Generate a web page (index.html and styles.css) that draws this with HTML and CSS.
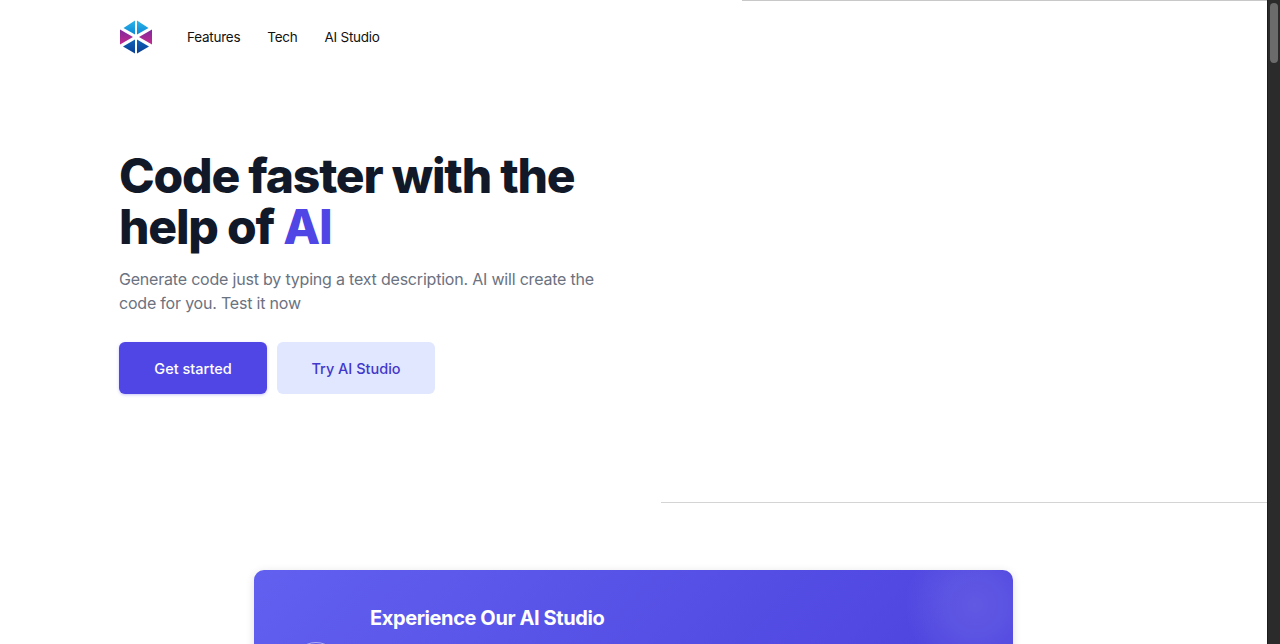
FILE: index.html
```html
<!DOCTYPE html>
<html lang="en">
<head>
  <meta charset="UTF-8">
  <meta name="viewport" content="width=device-width, initial-scale=1.0">
  <title>AI Code</title>
  <link rel="stylesheet" href="styles.css">
</head>
<body>
  <div class="page">
    <header class="nav">
      <svg class="logo" viewBox="0 0 32 34" width="32" height="34" aria-label="Logo">
        <defs>
          <linearGradient id="sky" x1="0" y1="0" x2="0" y2="1">
            <stop offset="0" stop-color="#29b6ea"/>
            <stop offset="1" stop-color="#0e86d4"/>
          </linearGradient>
          <linearGradient id="plum" x1="0" y1="0" x2="0" y2="1">
            <stop offset="0" stop-color="#7d2a9e"/>
            <stop offset="1" stop-color="#c4298c"/>
          </linearGradient>
          <linearGradient id="navy" x1="0" y1="0" x2="0" y2="1">
            <stop offset="0" stop-color="#0f62b8"/>
            <stop offset="1" stop-color="#0b3f94"/>
          </linearGradient>
        </defs>
        <path d="M15 0.500v14L3.500 8z" fill="url(#sky)"/>
        <path d="M17 0.500v14l11.500-6.500z" fill="url(#sky)"/>
        <path d="M0 9.500l13 7.500-13 7.500z" fill="url(#plum)"/>
        <path d="M32 9.500l-13 7.500 13 7.500z" fill="url(#plum)"/>
        <path d="M15 19.500v14L3 26.500z" fill="url(#navy)"/>
        <path d="M17 19.500v14l12-7z" fill="url(#navy)"/>
      </svg>
      <nav class="nav-links">
        <a href="#">Features</a>
        <a href="#">Tech</a>
        <a href="#">AI Studio</a>
      </nav>
    </header>

    <section class="hero">
      <div class="hero-text">
        <h1>Code faster with the help of <span class="accent">AI</span></h1>
        <p>Generate code just by typing a text description. AI will create the code for you. Test it now</p>
        <div class="hero-buttons">
          <a class="btn btn-primary" href="#">Get started</a>
          <a class="btn btn-soft" href="#">Try AI Studio</a>
        </div>
      </div>
      <div class="hero-art"></div>
    </section>

    <section class="studio-card">
      <div class="studio-glow"></div>
      <div class="studio-icon"></div>
      <h2>Experience Our AI Studio</h2>
    </section>
  </div>
  <div class="scrollbar"><div class="scrollbar-thumb"></div></div>
</body>
</html>
```

FILE: styles.css
```css
html, body {
  margin: 0;
  height: 644px;
  overflow: hidden;
}
body {
  background-color: #fff;
  color: #111827;
  font-family: Inter, "Liberation Sans", sans-serif;
  display: flex;
}
.page {
  flex: 1;
  min-width: 0;
  overflow: hidden;
}
.scrollbar {
  width: 13px;
  background-color: #2b2b2b;
  border-left: 1px solid #1c1c1c;
  box-sizing: border-box;
  padding: 3px 2px;
}
.scrollbar-thumb {
  height: 60px;
  border-radius: 5px;
  background-color: #6b6b6b;
}
.nav {
  display: flex;
  align-items: center;
  height: 74px;
  padding-left: 120px;
  box-sizing: border-box;
  padding-bottom: 1px;
}
.logo {
  display: block;
}
.nav-links {
  display: flex;
  gap: 27px;
  margin-left: 35px;
}
.nav-links a {
  color: #111;
  font-size: 13.500px;
  letter-spacing: -0.250px;
  text-decoration: none;
}
.hero {
  display: flex;
  height: 429px;
  position: relative;
}
.hero-text {
  padding: 76px 0 0 119px;
  width: 490px;
}
.hero h1 {
  margin: 0;
  font-size: 48px;
  line-height: 51px;
  font-weight: 800;
  letter-spacing: -1.200px;
  color: #111827;
}
.accent {
  color: #4f46e5;
}
.hero p {
  margin: 15px 0 0;
  font-size: 16px;
  line-height: 24px;
  letter-spacing: -0.200px;
  color: #6b7280;
}
.hero-buttons {
  display: flex;
  gap: 10px;
  margin-top: 27px;
}
.btn {
  display: flex;
  align-items: center;
  justify-content: center;
  height: 52px;
  border-radius: 6px;
  font-size: 14.500px;
  font-weight: 500;
  text-decoration: none;
}
.btn-primary {
  width: 148px;
  background-color: #4f46e5;
  color: #fff;
  box-shadow: 0 1px 3px rgba(79, 70, 229, 0.3);
}
.btn-soft {
  width: 158px;
  background-color: #e0e7ff;
  color: #4338ca;
}
.hero-art {
  position: absolute;
  top: -74px;
  right: 0;
  left: 661px;
  height: 502px;
  border-bottom: 1px solid #d4d4d4;
}
.hero-art::before {
  content: "";
  position: absolute;
  top: 0;
  left: 81px;
  right: 0;
  height: 1px;
  background-color: #c8c8c8;
}
.studio-card {
  position: relative;
  width: 759px;
  height: 300px;
  margin: 67px 0 0 254px;
  border-radius: 10px;
  overflow: hidden;
  background: linear-gradient(135deg, #6160ef 0%, #4f46e0 70%);
  box-shadow: 0 2px 10px rgba(0, 0, 0, 0.12);
}
.studio-glow {
  position: absolute;
  top: -35px;
  right: -32px;
  width: 140px;
  height: 140px;
  border-radius: 50%;
  background: radial-gradient(circle closest-side, rgba(255, 255, 255, 0.1) 0%, rgba(255, 255, 255, 0.07) 45%, rgba(255, 255, 255, 0) 100%);
}
.studio-icon {
  position: absolute;
  top: 72px;
  left: 38px;
  width: 46px;
  height: 46px;
  border: 1px solid rgba(255, 255, 255, 0.5);
  border-radius: 50%;
}
.studio-card h2 {
  margin: 0;
  padding: 35px 0 0 116px;
  font-size: 20px;
  line-height: 26px;
  font-weight: 700;
  letter-spacing: -0.400px;
  color: #fff;
}
```
